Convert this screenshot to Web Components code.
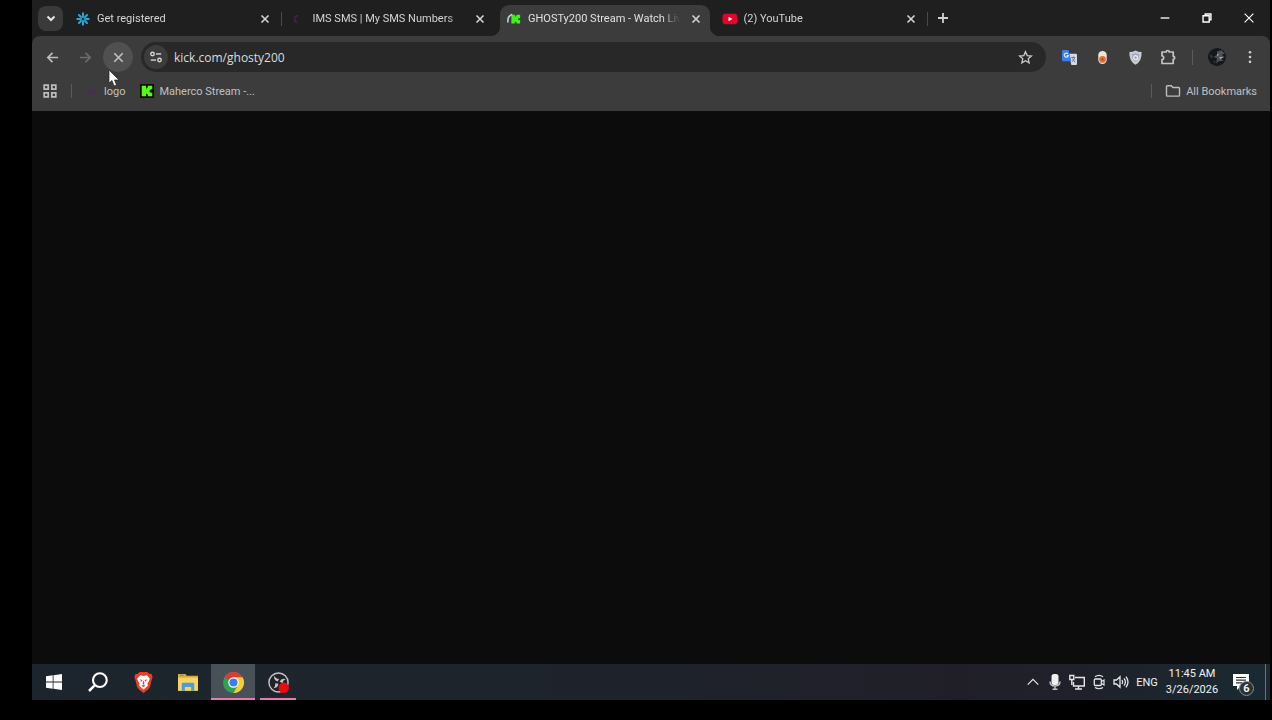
<!DOCTYPE html>
<html lang="en">
<head>
<meta charset="utf-8">
<title>GHOSTy200 Stream</title>
<style>
    body{
        margin:0;
        background:#000;
        color:#d4d4d4;
        font-family:Roboto, "Open Sans", "Noto Sans", sans-serif;
        font-size:11px;
    }
</style>
</head>
<body>
<desktop-screen></desktop-screen>

<script>
// rules shared by every element
const base = `
    *{
        box-sizing:border-box;
    }
    button, a, input{
        font:inherit;
        color:inherit;
        background:none;
        border:0;
        margin:0;
        padding:0;
        text-decoration:none;
        outline:none;
    }
    button, a{
        display:flex;
        align-items:center;
        justify-content:center;
        flex:none;
    }
    svg{
        display:block;
        flex:none;
    }
`;

const icons = {
    down: `<path d="M4.500 6.500 8 10l3.500-3.500" fill="none" stroke="#e6e6e6" stroke-width="2"/>`,
    close: `<path d="M4.500 4.500l7 7M11.500 4.500l-7 7" stroke="#d4d4d4" stroke-width="1.600"/>`,
    plus: `<path d="M8 3v10M3 8h10" stroke="#d0d0d0" stroke-width="1.800"/>`,
    back: `<path d="M14 8H3M8 3 3 8l5 5" fill="none" stroke="#bdbdbd" stroke-width="1.800"/>`,
    forward: `<path d="M2 8h11M8 3l5 5-5 5" fill="none" stroke="#6c6c6c" stroke-width="1.800"/>`,
    stop: `<path d="M3.500 3.500l9 9M12.500 3.500l-9 9" stroke="#c0c0c0" stroke-width="1.700"/>`,
    tune: `<g fill="none" stroke="#d6d6d6" stroke-width="1.600"><circle cx="4" cy="4.500" r="2"/><path d="M8 4.500h6"/><circle cx="12" cy="11.500" r="2"/><path d="M2 11.500h6"/></g>`,
    star: `<path d="M8 1.800l1.800 4.200 4.500.4-3.400 3 1 4.400L8 11.500l-3.900 2.300 1-4.400-3.400-3 4.500-.4z" fill="none" stroke="#c8c8c8" stroke-width="1.400"/>`,
    grid: `<g fill="none" stroke="#bdbdbd" stroke-width="1.700"><path d="M2.200 2.200h4v4h-4zM9.800 2.200h4v4h-4zM2.200 9.800h4v4h-4zM9.800 9.800h4v4h-4z"/></g>`,
    folder: `<path d="M1.500 3.500q0-.8.8-.8h4L8 4.500h5.700q.8 0 .8.800v7q0 .8-.8.800H2.300q-.8 0-.8-.8z" fill="none" stroke="#bdbdbd" stroke-width="1.400"/>`,
    dots: `<g fill="#cfcfcf"><circle cx="8" cy="2.500" r="1.500"/><circle cx="8" cy="8" r="1.500"/><circle cx="8" cy="13.500" r="1.500"/></g>`,
    puzzle: `<path d="M2 3h4.200a1.500 1.500 0 0 1 3 0h4v4.300a1.500 1.500 0 0 1 0 3v4.200H2v-3.800c2.400-.2 2.400-3.600 0-3.800z" fill="none" stroke="#c4c4c4" stroke-width="1.700" stroke-linejoin="round"/>`,
    minimize: `<path d="M3 8h10" stroke="#fff" stroke-width="1.500"/>`,
    restore: `<path d="M3.500 5.500h7v7h-7zM6 5V3.500h6.500V10H11" fill="none" stroke="#fff" stroke-width="1.600"/>`,
    exit: `<path d="M3 3l10 10M13 3 3 13" stroke="#fff" stroke-width="1.300"/>`,

    // favicons
    flake: `<g stroke="#2ba9d6" stroke-width="2.300" fill="none" stroke-linecap="round"><path d="M8 1.500v4M8 10.500v4M1.500 8h4M10.500 8h4M3.400 3.400l2.800 2.800M9.800 9.800l2.800 2.800M12.600 3.400 9.800 6.200M6.200 9.800l-2.800 2.800"/></g><circle cx="8" cy="8" r="2.500" fill="none" stroke="#2590b8" stroke-width="1.200"/>`,
    ims: `<path d="M7 4q-4 0-4 4t3 4" fill="none" stroke="#43204c" stroke-width="2"/><path d="M8 11h6" stroke="#2b1b2e" stroke-width="2"/>`,
    imslogo: `<path d="M2 4l4 3v6M2 4v3" fill="none" stroke="#56285c" stroke-width="1.600"/><path d="M8 8h7M8 10h5" stroke="#4a2d50" stroke-width="1.600"/>`,
    kickload: `<path d="M5 3h4v2h1V4h1V3h4v4h-2v2h2v4h-4v-1h-1v-1H9v2H5z" fill="#3ff219"/><path d="M1.200 12Q0 5 6 2.500" fill="none" stroke="#b9d2e4" stroke-width="1.800"/>`,
    kick: `<path d="M0 0h16v16H0z" fill="#0b1108"/><path d="M2 2h5v3h1V4h1V2h5v4h-2v1h-1v2h1v1h2v4H9v-2H8v-1H7v3H2z" fill="#53fc18"/>`,
    youtube: `<rect x="-.500" y="2" width="17" height="12" rx="3.500" fill="#e8002d"/><path d="M6.300 5.500v5l4.500-2.500z" fill="#fff"/>`,

    // extensions
    translate: `<path d="M7 4h8q1 0 1 1v10q0 1-1 1h-5z" fill="#d5d9e3"/><path d="M0 1q0-1 1-1h6l3 12H1q-1 0-1-1z" fill="#3f7ee2"/><path d="M6.300 4A2.200 2.200 0 1 0 6.800 6H5" fill="none" stroke="#d7e5ff" stroke-width="1.300"/><path d="M10 8h4M12 7v1M13.500 8q-.5 3-3 4.500M11 9l3 4" fill="none" stroke="#66718f" stroke-width="1"/>`,
    pill: `<rect x="3.500" y="1" width="9" height="14" rx="4.500" fill="#f0e5da"/><circle cx="8" cy="10" r="3.600" fill="#e2702f"/><path d="M6.500 10h3M8 8.500v3" stroke="#b5511f"/>`,
    shield: `<path d="M8 .5q3 1.800 6.500 1.700Q15 12 8 15.800 1 12 1.500 2.200 5 2.300 8 .5z" fill="#c9ced6"/><path d="M8 3.200q2 1 4 1 .2 6-4 8.500Q3.800 10 4 4.200q2 0 4-1z" fill="#a4acb8"/><path d="M10 7a2.200 2.200 0 1 0 0 2.500V6.500" fill="none" stroke="#eef1f5" stroke-width="1.200"/>`,
    avatar: `<circle cx="8" cy="8" r="8" fill="#15171a"/><path d="M8 3l4-1 3 3-3 1 3 2-4 1 3 2-5 1-2 2 1-5-3-1 3-2z" fill="#4c5359"/><path d="M8 5l2 1-2 1zM10 8l4 0-3 2z" fill="#a4acb0"/><path d="M2 5l3 3-3 1zM4 11l3 1-1 2z" fill="#30353a"/>`,

    // taskbar
    windows: `<path d="M0 2.300 6.700 1.300V7.600H0zM7.500 1.200 16 0v7.600H7.500zM0 8.400h6.700v6.300L0 13.700zM7.500 8.400H16V16l-8.500-1.200z" fill="#fff"/>`,
    search: `<circle cx="9.500" cy="6.500" r="5.500" fill="none" stroke="#fff" stroke-width="1.700"/><path d="M5.500 10.500.8 15.200" stroke="#fff" stroke-width="2"/>`,
    brave: `<path d="M5 0h6l1.500 1.500 1.500-.2L15 4l-.5 1L13 11q-.4 1.500-2 2.700L8 16l-3-2.300Q3.400 12.500 3 11L1.500 5 1 4l1-2.700 1.500.2z" fill="#e5412a"/><path d="M8 3l2.500-.6 2.300 2.700-.8 1.900-1 2 .3 1.500-1.700 1.500L8 13.500 6.400 12l-1.700-1.500L5 9 4 7l-.8-1.900 2.300-2.700z" fill="#fff"/><path d="M5 5.300l2.200.9-.7 1.300zM11 5.300l-2.200.9.7 1.300zM7.700 7h.6l.4 2.500H7.300zM6.500 10.500 8 9.800l1.500.7L8 11.500z" fill="#e5412a"/>`,
    explorer: `<path d="M0 1.500h6l1 1.500h9v12H0z" fill="#dba93a"/><path d="M0 4.500h16V15H0z" fill="#f4d468"/><path d="M3 15V9.500q0-1 1-1h8q1 0 1 1V15h-2.500v-3h-5v3z" fill="#4b9ed4"/><path d="M1.500 2.500h3" stroke="#5faa62"/>`,
    chrome: `<circle cx="8" cy="8" r="8" fill="#31a350"/><path d="M8 8 1.070 4A8 8 0 0 1 14.930 4z" fill="#dc3b32"/><path d="M8 4h6.930A8 8 0 0 1 8 16l3.460-6z" fill="#f9cb35"/><circle cx="8" cy="8" r="4" fill="#fff"/><circle cx="8" cy="8" r="3.100" fill="#397fe5"/>`,
    obs: `<circle cx="8" cy="8" r="7.300" fill="#222126" stroke="#c4c4c7" stroke-width="1.100"/><path d="M7.500 7.300Q4 6 4.800 2.600 5.600 5 8.600 5.300 7.700 6 7.500 7.300zM8.800 7.500q1.500-3.300 4.700-2-2 .5-2.500 3-1-.9-2.200-1zM7.800 8.700Q8 12 4.300 12.300q1.500-1.500 1.200-3.800 1.200.5 2.300.2z" fill="#c4c4c7"/><circle cx="12" cy="12" r="4" fill="#ee0a0c"/>`,
    up: `<path d="M2 11l6-6 6 6" fill="none" stroke="#e6e6e6" stroke-width="1.400"/>`,
    mic: `<rect x="4.500" y="0" width="7" height="11" rx="2.500" fill="#f0f0f0"/><path d="M3 7.500q0 4.500 5 4.500t5-4.500M8 12v3.500M5.500 15.300h5" fill="none" stroke="#c0c0c0" stroke-width="1.400"/>`,
    network: `<path d="M6 3.500H15.300v8.500H4.500V8M9.500 12v3M6 15h7" fill="none" stroke="#e6e6e6" stroke-width="1.400"/><path d="M.8 1.500h4v4h-4zM2.800 6v5" fill="none" stroke="#e6e6e6" stroke-width="1.400"/>`,
    meet: `<rect x="3.300" y="5" width="7" height="6.500" rx="1" fill="none" stroke="#e6e6e6" stroke-width="1.300"/><path d="M10.500 7.500 13 6v5l-2.500-1.500M4 2.800Q8 0 12 2.800M4 13.500Q8 16 12 13.500" fill="none" stroke="#e6e6e6" stroke-width="1.200"/>`,
    volume: `<path d="M1 6h2.500L7 2.800v10.400L3.500 10H1zM9 6q1.400 2 0 4M11 4.300q2.800 3.700 0 7.400M13 2.700q4 5.300 0 10.600" fill="none" stroke="#e6e6e6" stroke-width="1.300"/>`,
    notes: `<path d="M0 0h16v12H8l-4 4v-4H0z" fill="#fff"/><path d="M3 3.500h10M3 6.200h10M3 8.900h6" stroke="#28323a" stroke-width="1.200"/>`
};

function icon(name, size = 16){
    return `<svg width="${size}" height="${size}" viewBox="0 0 16 16" overflow="visible" aria-hidden="true">${icons[name]}</svg>`;
}

class browserTab extends HTMLElement{
    constructor(){
        super();
        this.attachShadow({mode: "open"});
    }

    connectedCallback(){
        this.shadowRoot.innerHTML = `
            <style>
                ${base}
                :host{
                    display:flex;
                    flex:1;
                    min-width:0;
                    align-items:center;
                }
                .tab{
                    flex:1;
                    min-width:0;
                    height:100%;
                    display:flex;
                    align-items:center;
                    gap:7px;
                    padding:0 6px 4px 7px;
                    position:relative;
                }
                .title{
                    flex:1;
                    min-width:0;
                    overflow:hidden;
                    white-space:nowrap;
                    mask-image:linear-gradient(90deg, #000 134px, transparent 152px);
                }
                .sep{
                    width:1px;
                    height:14px;
                    margin:0 3px 4px 2px;
                    background:#4a4a4a;
                }
                :host([active]) .tab{
                    background:#3c3c3c;
                    border-radius:9px 9px 0 0;
                    color:#e0e0e0;
                }
                :host([active]) .tab::before,
                :host([active]) .tab::after{
                    content:"";
                    position:absolute;
                    bottom:0;
                    width:9px;
                    height:9px;
                    left:-9px;
                    background:radial-gradient(circle at 0 0, transparent 9px, #3c3c3c 9px);
                }
                :host([active]) .tab::after{
                    left:auto;
                    right:-9px;
                    background:radial-gradient(circle at 100% 0, transparent 9px, #3c3c3c 9px);
                }
                :host([active]) .sep, :host([nosep]) .sep{
                    background:none;
                }
            </style>
            <div class="tab">
                ${icon(this.getAttribute("icon"), 14)}
                <span class="title"><slot></slot></span>
                <button aria-label="Close tab">${icon("close")}</button>
            </div>
            <span class="sep"></span>
        `;
    }
}

class tabStrip extends HTMLElement{
    constructor(){
        super();
        this.attachShadow({mode: "open"});
    }

    connectedCallback(){
        this.shadowRoot.innerHTML = `
            <style>
                ${base}
                :host{
                    display:flex;
                    height:36px;
                    align-items:center;
                    background:#1f1f1f;
                }
                .search{
                    width:25px;
                    height:25px;
                    margin:0 6px;
                    border-radius:8px;
                    background:#3a3a3a;
                }
                .tabs{
                    flex:0 1 862px;
                    min-width:0;
                    height:100%;
                    padding-top:5px;
                    display:flex;
                }
                .new{
                    width:24px;
                    height:24px;
                }
                .window{
                    margin-left:auto;
                    display:flex;
                }
                .window button{
                    width:42px;
                    height:36px;
                }
            </style>
            <button class="search" aria-label="Search tabs">${icon("down")}</button>
            <div class="tabs">
                <browser-tab icon="flake">Get registered</browser-tab>
                <browser-tab icon="ims" nosep>IMS SMS | My SMS Numbers</browser-tab>
                <browser-tab icon="kickload" active>GHOSTy200 Stream - Watch Live</browser-tab>
                <browser-tab icon="youtube">(2) YouTube</browser-tab>
            </div>
            <button class="new" aria-label="New tab">${icon("plus")}</button>
            <div class="window">
                <button aria-label="Minimize">${icon("minimize", 14)}</button>
                <button aria-label="Restore">${icon("restore", 14)}</button>
                <button aria-label="Close">${icon("exit", 14)}</button>
            </div>
        `;
    }
}

class toolBar extends HTMLElement{
    constructor(){
        super();
        this.attachShadow({mode: "open"});
    }

    connectedCallback(){
        this.shadowRoot.innerHTML = `
            <style>
                ${base}
                :host{
                    display:flex;
                    align-items:center;
                    gap:3px;
                    height:42px;
                    padding:0 5px;
                    background:#3c3c3c;
                    border-radius:8px 8px 0 0;
                }
                button{
                    width:30px;
                    height:30px;
                    border-radius:50%;
                }
                .stop{
                    background:#505050;
                }
                .address{
                    flex:1;
                    min-width:0;
                    height:30px;
                    margin:0 5px;
                    padding:0 9px 0 3px;
                    display:flex;
                    align-items:center;
                    gap:6px;
                    background:#282828;
                    border-radius:15px;
                }
                .address button{
                    width:24px;
                    height:24px;
                }
                .address .info{
                    background:#3c3c3c;
                }
                input{
                    flex:1;
                    min-width:0;
                    height:24px;
                    font-family:"Open Sans", "Noto Sans", sans-serif;
                    font-size:12px;
                    color:#dcdcdc;
                }
                .ext{
                    display:flex;
                    gap:3px;
                }
                .sep{
                    width:1px;
                    height:15px;
                    margin:0 6px;
                    background:#5c5c5c;
                }
            </style>
            <button aria-label="Back">${icon("back", 15)}</button>
            <button aria-label="Forward">${icon("forward", 15)}</button>
            <button class="stop" aria-label="Stop">${icon("stop", 15)}</button>
            <div class="address">
                <button class="info" aria-label="Site information">${icon("tune", 14)}</button>
                <input type="text" value="kick.com/ghosty200" aria-label="Address" spellcheck="false">
                <button aria-label="Bookmark this tab">${icon("star", 15)}</button>
            </div>
            <div class="ext">
                <button aria-label="Translate">${icon("translate", 15)}</button>
                <button aria-label="Recorder">${icon("pill", 15)}</button>
                <button aria-label="Shield">${icon("shield", 15)}</button>
                <button aria-label="Extensions">${icon("puzzle")}</button>
            </div>
            <span class="sep"></span>
            <button aria-label="Profile">${icon("avatar", 18)}</button>
            <button aria-label="Menu">${icon("dots", 14)}</button>
        `;
    }
}

class bookmarksBar extends HTMLElement{
    constructor(){
        super();
        this.attachShadow({mode: "open"});
    }

    connectedCallback(){
        this.shadowRoot.innerHTML = `
            <style>
                ${base}
                :host{
                    display:flex;
                    align-items:center;
                    height:33px;
                    padding:0 13px 7px 10px;
                    background:#3c3c3c;
                    color:#c0c0c0;
                    white-space:nowrap;
                }
                a{
                    gap:5px;
                    margin-right:15px;
                }
                .sep{
                    width:1px;
                    height:14px;
                    margin:0 13px;
                    background:#5c5c5c;
                }
                .right{
                    margin-left:auto;
                }
                .all{
                    gap:5px;
                }
            </style>
            <button aria-label="Apps">${icon("grid")}</button>
            <span class="sep"></span>
            <a href="#logo">${icon("imslogo", 14)}logo</a>
            <a href="#maherco">${icon("kick", 14)}Maherco Stream -...</a>
            <span class="sep right"></span>
            <button class="all">${icon("folder")}All Bookmarks</button>
        `;
    }
}

class taskBar extends HTMLElement{
    constructor(){
        super();
        this.attachShadow({mode: "open"});
    }

    connectedCallback(){
        this.shadowRoot.innerHTML = `
            <style>
                ${base}
                :host{
                    display:flex;
                    height:36px;
                    background:linear-gradient(90deg, #1c252d, #1e242c 40%, #201f28 75%, #1f2129 85%, #1a2a32);
                    color:#f2f2f2;
                }
                .start button{
                    width:44px;
                }
                .start, .apps, .tray{
                    display:flex;
                }
                .apps{
                    gap:1px;
                    padding-left:1px;
                }
                .apps button{
                    width:44px;
                    position:relative;
                }
                .apps .current{
                    background:#495158;
                }
                .apps .open::after, .apps .current::after{
                    content:"";
                    position:absolute;
                    left:4px;
                    right:4px;
                    bottom:0;
                    height:2px;
                    background:#e779ad;
                }
                .apps .current::after{
                    left:0;
                    right:0;
                }
                .tray{
                    margin-left:auto;
                }
                .tray button{
                    width:22px;
                }
                .tray .lang{
                    width:30px;
                }
                .tray .clock{
                    width:60px;
                    flex-direction:column;
                    line-height:16px;
                }
                .tray .notes{
                    width:38px;
                    position:relative;
                }
                .badge{
                    position:absolute;
                    left:17px;
                    top:17px;
                    width:15px;
                    height:15px;
                    border:1px solid #8a8f93;
                    border-radius:50%;
                    background:#2a3036;
                    line-height:13px;
                    font-weight:700;
                }
                .tray .peek{
                    width:5px;
                    margin-left:5px;
                    border-left:1px solid #69737a;
                }
            </style>
            <div class="start">
                <button aria-label="Start">${icon("windows")}</button>
                <button aria-label="Search">${icon("search", 20)}</button>
            </div>
            <div class="apps">
                <button aria-label="Brave">${icon("brave", 21)}</button>
                <button aria-label="File Explorer">${icon("explorer", 20)}</button>
                <button class="current" aria-label="Chrome">${icon("chrome", 21)}</button>
                <button class="open" aria-label="OBS Studio">${icon("obs", 21)}</button>
            </div>
            <div class="tray">
                <button aria-label="Show hidden icons">${icon("up", 14)}</button>
                <button aria-label="Microphone">${icon("mic")}</button>
                <button aria-label="Network">${icon("network")}</button>
                <button aria-label="Meet Now">${icon("meet")}</button>
                <button aria-label="Volume">${icon("volume")}</button>
                <button class="lang">ENG</button>
                <button class="clock"><span>11:45 AM</span><span>3/26/2026</span></button>
                <button class="notes" aria-label="Notifications">${icon("notes")}<span class="badge">6</span></button>
                <button class="peek" aria-label="Show desktop"></button>
            </div>
        `;
    }
}

class desktopScreen extends HTMLElement{
    constructor(){
        super();
        this.attachShadow({mode: "open"});
    }

    connectedCallback(){
        this.shadowRoot.innerHTML = `
            <style>
                ${base}
                :host{
                    display:flex;
                    flex-direction:column;
                    box-sizing:border-box;
                    min-height:100vh;
                    padding:0 2px 20px 32px;
                    position:relative;
                }
                .browser{
                    flex:1;
                    display:flex;
                    flex-direction:column;
                    background:#1f1f1f;
                }
                .page{
                    flex:1;
                    background:#0c0c0c;
                }
                .cursor{
                    position:absolute;
                    left:108px;
                    top:69px;
                }
            </style>
            <div class="browser">
                <tab-strip></tab-strip>
                <tool-bar></tool-bar>
                <bookmarks-bar></bookmarks-bar>
                <main class="page"></main>
            </div>
            <task-bar></task-bar>
            <svg class="cursor" width="12" height="18" viewBox="0 0 12 18" aria-hidden="true">
                <path d="M1 1v13l3-2.500L6 17l2.500-1-2-5H11z" fill="#fff" stroke="#222" stroke-width=".7"/>
            </svg>
        `;
    }
}

window.customElements.define("browser-tab", browserTab);
window.customElements.define("tab-strip", tabStrip);
window.customElements.define("tool-bar", toolBar);
window.customElements.define("bookmarks-bar", bookmarksBar);
window.customElements.define("task-bar", taskBar);
window.customElements.define("desktop-screen", desktopScreen);
</script>
</body>
</html>
